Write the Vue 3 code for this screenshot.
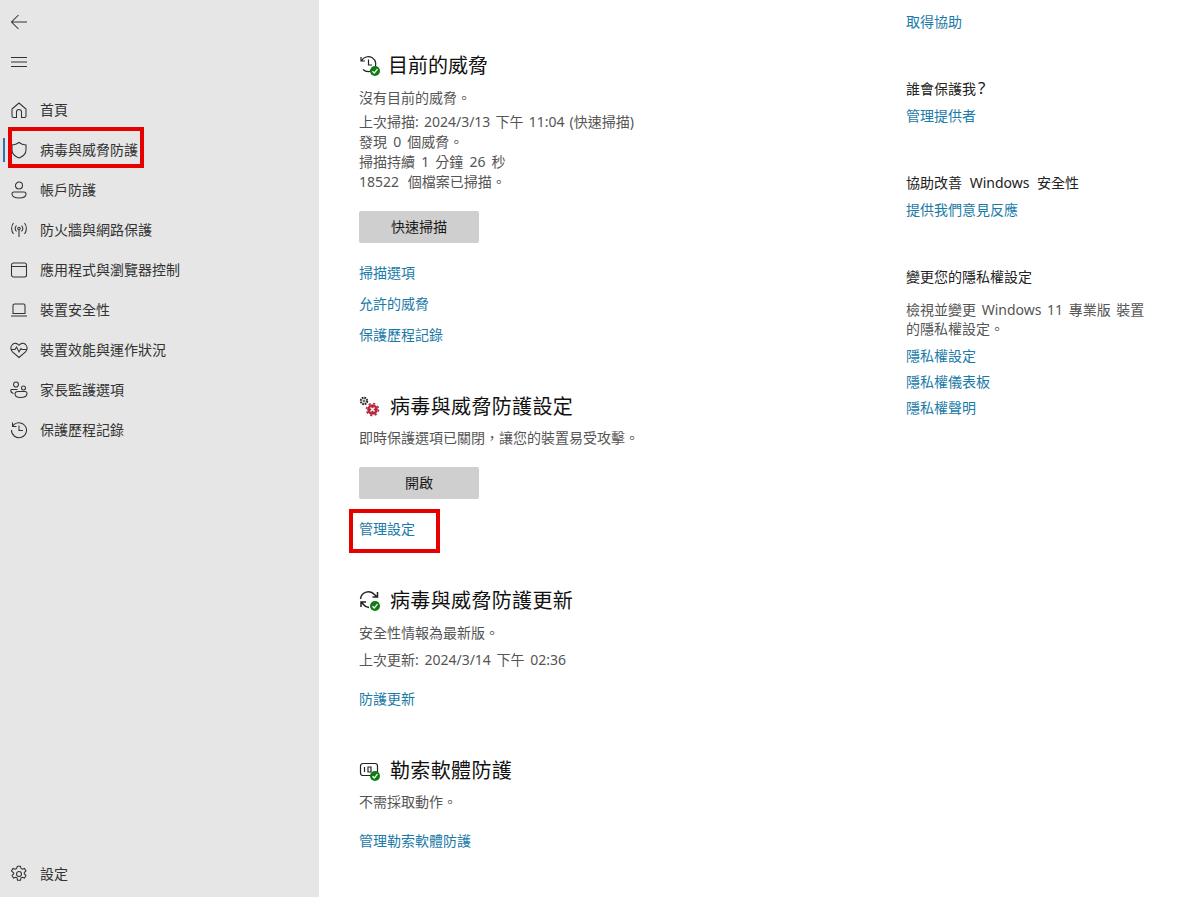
<script setup>
const nav = [
  { label: '首頁', icon: 'home' },
  { label: '病毒與威脅防護', icon: 'shield', active: true },
  { label: '帳戶防護', icon: 'person' },
  { label: '防火牆與網路保護', icon: 'wifi' },
  { label: '應用程式與瀏覽器控制', icon: 'window' },
  { label: '裝置安全性', icon: 'laptop' },
  { label: '裝置效能與運作狀況', icon: 'heart' },
  { label: '家長監護選項', icon: 'family' },
  { label: '保護歷程記錄', icon: 'history' }
]
</script>

<template>
  <div class="page">
    <aside class="sidebar">
      <div class="tool">
        <svg class="ico" viewBox="0 0 18 18"><path d="M17 9H1.500M8.500 2 1.500 9l7 7" /></svg>
      </div>
      <div class="tool">
        <svg class="ico" viewBox="0 0 18 18"><path d="M1 4.500h16M1 9h16M1 13.500h16" /></svg>
      </div>
      <nav class="nav">
        <div v-for="item in nav" :key="item.label" class="nav-item">
          <span v-if="item.active" class="indicator"></span>
          <svg class="ico" viewBox="0 0 18 18">
            <path v-if="item.icon === 'home'" d="M2 8 9 2l7 6v7a1.500 1.500 0 0 1-1.500 1.500H11.500V11a2.500 2.500 0 0 0-5 0v5.500H3.500A1.500 1.500 0 0 1 2 15Z" />
            <path v-else-if="item.icon === 'shield'" d="M9 1.500c2 1.500 4 2.300 7 2.500v5c0 4-3 6.500-7 8-4-1.500-7-4-7-8V4c3-.2 5-1 7-2.500Z" />
            <template v-else-if="item.icon === 'person'">
              <circle cx="9" cy="4.500" r="3.500" />
              <path d="M2 13a2 2 0 0 1 2-2h10a2 2 0 0 1 2 2c0 2.500-3 4-7 4s-7-1.500-7-4Z" />
            </template>
            <template v-else-if="item.icon === 'wifi'">
              <circle cx="9" cy="7.500" r="1.300" />
              <path d="M9 9v7M6.500 4.500a4.500 4.500 0 0 0 0 6M11.500 4.500a4.500 4.500 0 0 1 0 6M3.500 2C1 5 1 10 3.500 13M14.500 2c2.500 3 2.500 8 0 11" />
            </template>
            <template v-else-if="item.icon === 'window'">
              <rect x="1.500" y="2" width="15" height="14" rx="2" />
              <path d="M1.500 5.500h15" />
            </template>
            <path v-else-if="item.icon === 'laptop'" d="M3 12.500V4.500A1.500 1.500 0 0 1 4.500 3h9A1.500 1.500 0 0 1 15 4.500v8ZM1 15h16" />
            <path v-else-if="item.icon === 'heart'" d="M2.500 11C.5 8.500.5 5.500 2.500 3.500c2-1.800 4.800-1.500 6.500.8 1.700-2.300 4.500-2.600 6.500-.8 2 2 2 5 0 7.500L9 16.500ZM.8 8.500H5l1.500-2.500 2.500 5 2-3.500.8 1H17.200" />
            <template v-else-if="item.icon === 'family'">
              <circle cx="6" cy="3.500" r="2.500" />
              <circle cx="13.500" cy="7" r="2" />
              <path d="M1 8.500h6.500M1 8.500c-.5 2 .5 3.500 2.500 4M8 10.500h7c1.500 0 2 1 2 2 0 2-2 4-6.500 4S5 14.500 5 13c0-1.500 1.500-2.500 3-2.500Z" />
            </template>
            <path v-else d="M2.500 1.500v4h4M2.500 5.500A7.500 7.500 0 1 1 1.500 9M9 4.500V9.500h4" />
          </svg>
          <span class="nav-label">{{ item.label }}</span>
        </div>
      </nav>
      <div class="nav-item settings">
        <svg class="ico" viewBox="0 0 18 18">
          <circle cx="9" cy="9" r="2.500" />
          <path d="M7.500 1.200h3l.5 2.300 1.300.7 2.200-.8 1.500 2.600-1.700 1.500v1.400l1.700 1.500-1.500 2.600-2.200-.8-1.300.7-.5 2.300h-3l-.5-2.300-1.300-.7-2.200.8-1.500-2.600 1.700-1.500V8L1.500 6l1.500-2.600 2.200.8 1.300-.7Z" />
        </svg>
        <span class="nav-label">設定</span>
      </div>
    </aside>

    <main class="main">
      <section class="threats">
        <h2 class="heading">
          <span class="head-icon">
            <svg class="ico ico-lg" viewBox="0 0 20 20"><path d="M2 2v4h4M2.500 6A7.500 7.500 0 1 1 4 14.500M9.500 4.500V10H13" /></svg>
            <svg class="badge" viewBox="0 0 10 10"><circle cx="5" cy="5" r="5" fill="#107c10" /><path class="check" d="M2.500 5.200 4.300 7l3.200-3.800" /></svg>
          </span>
          <span class="title-first">目前的威脅</span>
        </h2>
        <p class="line first-line">沒有目前的威脅。</p>
        <p class="line date">上次掃描: 2024/3/13 下午 11:04 (快速掃描)</p>
        <p class="line">發現 0 個威脅。</p>
        <p class="line">掃描持續 1 分鐘 26 秒</p>
        <p class="line wide">18522 個檔案已掃描。</p>
        <button class="btn btn-scan">快速掃描</button>
        <a class="link scan-link">掃描選項</a>
        <a class="link scan-link">允許的威脅</a>
        <a class="link scan-link">保護歷程記錄</a>
      </section>

      <section class="settings-sec">
        <h2 class="heading">
          <span class="head-icon">
            <svg class="gears" viewBox="0 0 20 20">
              <circle cx="5" cy="5" r="3.200" class="gear-stroke" />
              <circle cx="5" cy="5" r="1" class="gear-inner" />
              <circle cx="13.500" cy="13.500" r="5.300" fill="#b52a3c" />
              <circle cx="13.500" cy="13.500" r="6" class="gear-red" />
              <path class="check" d="M11.500 11.500l4 4M15.500 11.500l-4 4" />
            </svg>
          </span>
          <span class="title">病毒與威脅防護設定</span>
        </h2>
        <p class="line sec-first">即時保護選項已關閉，讓您的裝置易受攻擊。</p>
        <button class="btn btn-open">開啟</button>
        <a class="link manage">管理設定</a>
      </section>

      <section class="update-sec">
        <h2 class="heading">
          <span class="head-icon">
            <svg class="ico ico-lg ico-sync" viewBox="0 0 20 20"><path d="M1.500 9A8 8 0 0 1 15.500 4.500L18 7M18.500 2v5h-5M2 17v-5h5M2 12l2.500 2.500A7.500 7.500 0 0 0 10 17.500" /></svg>
            <svg class="badge" viewBox="0 0 10 10"><circle cx="5" cy="5" r="5" fill="#107c10" /><path class="check" d="M2.500 5.200 4.300 7l3.200-3.800" /></svg>
          </span>
          <span class="title">病毒與威脅防護更新</span>
        </h2>
        <p class="line update-first">安全性情報為最新版。</p>
        <p class="line update-line">上次更新: 2024/3/14 下午 02:36</p>
        <a class="link update-link">防護更新</a>
      </section>

      <section class="ransom-sec">
        <h2 class="heading">
          <span class="head-icon">
            <svg class="ico ico-lg" viewBox="0 0 20 20"><rect x="1.500" y="3.500" width="17" height="12" rx="2.500" /><path d="M5.500 7v5M9 7h3v5H9Z" /></svg>
            <svg class="badge" viewBox="0 0 10 10"><circle cx="5" cy="5" r="5" fill="#107c10" /><path class="check" d="M2.500 5.200 4.300 7l3.200-3.800" /></svg>
          </span>
          <span class="title">勒索軟體防護</span>
        </h2>
        <p class="line sec-first">不需採取動作。</p>
        <a class="link ransom-link">管理勒索軟體防護</a>
      </section>
      <span class="mark mark-manage"></span>
    </main>

    <aside class="side">
      <a class="link help">取得協助</a>
      <h3 class="side-title who">誰會保護我<span class="q">?</span></h3>
      <a class="link side-link">管理提供者</a>
      <h3 class="side-title improve">協助改善 Windows 安全性</h3>
      <a class="link side-link">提供我們意見反應</a>
      <h3 class="side-title privacy">變更您的隱私權設定</h3>
      <p class="side-text">檢視並變更 Windows 11 專業版 裝置的隱私權設定。</p>
      <a class="link side-link privacy-link">隱私權設定</a>
      <a class="link side-link privacy-link">隱私權儀表板</a>
      <a class="link side-link privacy-link">隱私權聲明</a>
    </aside>
    <span class="mark mark-nav"></span>
  </div>
</template>

<style>
html, body { margin: 0; background: #fff; }
</style>

<style scoped>
.page {
  position: relative;
  display: flex;
  height: 897px;
  overflow: hidden;
  background: #fff;
  color: #1a1a1a;
  font-family: "Noto Sans", "Noto Sans CJK TC", sans-serif;
  font-size: 14px;
  word-spacing: 2.5px;
}
.sidebar {
  width: 319px;
  flex: none;
  box-sizing: border-box;
  padding: 2px 0 3px;
  display: flex;
  flex-direction: column;
  background: #e6e6e6;
}
.tool {
  height: 40px;
  padding-left: 10px;
  display: flex;
  align-items: center;
}
.ico {
  width: 18px;
  height: 18px;
  flex: none;
  fill: none;
  stroke: #333;
  stroke-width: 1.050;
}
.nav { margin-top: 8px; }
.nav-item {
  position: relative;
  height: 40px;
  padding-left: 10px;
  display: flex;
  align-items: center;
  gap: 12px;
}
.nav-label { color: #333; line-height: 20px; }
.indicator {
  position: absolute;
  left: 3px;
  top: 8px;
  width: 2px;
  height: 24px;
  background: #2b76a8;
}
.settings { margin-top: auto; }

.main {
  position: relative;
  width: 547px;
  flex: none;
  box-sizing: border-box;
  padding: 50px 0 0 40px;
}
.heading {
  margin: 0;
  height: 30px;
  display: flex;
  align-items: center;
  font-size: 20px;
  font-weight: 400;
  line-height: 30px;
  color: #111;
  font-family: "Noto Sans CJK TC", serif;
}
.head-icon {
  position: relative;
  width: 20px;
  height: 20px;
  flex: none;
  display: block;
}
.ico-lg { display: block; width: 20px; height: 20px; stroke: #222; stroke-width: 1.200; }
.ico-sync { stroke-width: 1.500; }
.badge { position: absolute; right: -1px; bottom: -1px; width: 10px; height: 10px; }
.check { fill: none; stroke: #fff; stroke-width: 1.300; }
.gears { display: block; width: 20px; height: 20px; overflow: visible; }
.gear-stroke { fill: none; stroke: #222; stroke-width: 2; stroke-dasharray: 1.700 .8; }
.gear-inner { fill: none; stroke: #222; stroke-width: .8; }
.gear-red { fill: none; stroke: #b52a3c; stroke-width: 1.600; stroke-dasharray: 2.200 2.500; }
.title-first { margin-left: 9px; }
.title { margin-left: 11px; letter-spacing: .35px; }
.line {
  margin: 0;
  line-height: 20px;
  color: #555;
}
.first-line { margin-top: 8px; margin-bottom: 4px; }
.date { word-spacing: 1.500px; }
.wide { word-spacing: 5px; }
.sec-first { margin-top: 7px; }
.update-first { margin-top: 8px; }
.btn {
  display: block;
  width: 120px;
  height: 32px;
  border: 0;
  border-radius: 2px;
  padding: 0 0 2px;
  background: #cfcfcf;
  color: #1a1a1a;
  font: inherit;
}
.btn-scan { margin-top: 19px; margin-bottom: 20px; }
.btn-open { margin-top: 19px; margin-bottom: 20px; }
.link {
  display: block;
  color: #1a7aa8;
  line-height: 20px;
}
.scan-link { margin-bottom: 11px; }
.settings-sec { margin-top: 46px; }
.update-sec { margin-top: 46px; }
.update-line { margin-top: 7px; word-spacing: 2px; }
.update-link { margin-top: 19px; }
.ransom-sec { margin-top: 46px; }
.ransom-link { margin-top: 19px; }

.side {
  flex: 1;
  box-sizing: border-box;
  padding: 12px 40px 0;
}
.side-title {
  margin: 0;
  font-size: 14px;
  font-weight: 400;
  line-height: 20px;
  color: #222;
}
.q { margin-left: 2px; font-size: 17px; line-height: 14px; }
.who { margin-top: 47px; margin-bottom: 7px; }
.improve { margin-top: 47px; margin-bottom: 7px; word-spacing: 4px; }
.privacy { margin-top: 47px; margin-bottom: 13px; }
.side-text { margin: 0 0 8px; line-height: 19px; color: #555; word-spacing: 2px; }
.privacy-link { margin-bottom: 6px; }
.mark {
  position: absolute;
  box-sizing: border-box;
  border: 4px solid #e60000;
  pointer-events: none;
}
.mark-nav { left: 8px; top: 127px; width: 136px; height: 41px; }
.mark-manage { left: 30px; top: 509px; width: 91px; height: 44px; }
</style>
